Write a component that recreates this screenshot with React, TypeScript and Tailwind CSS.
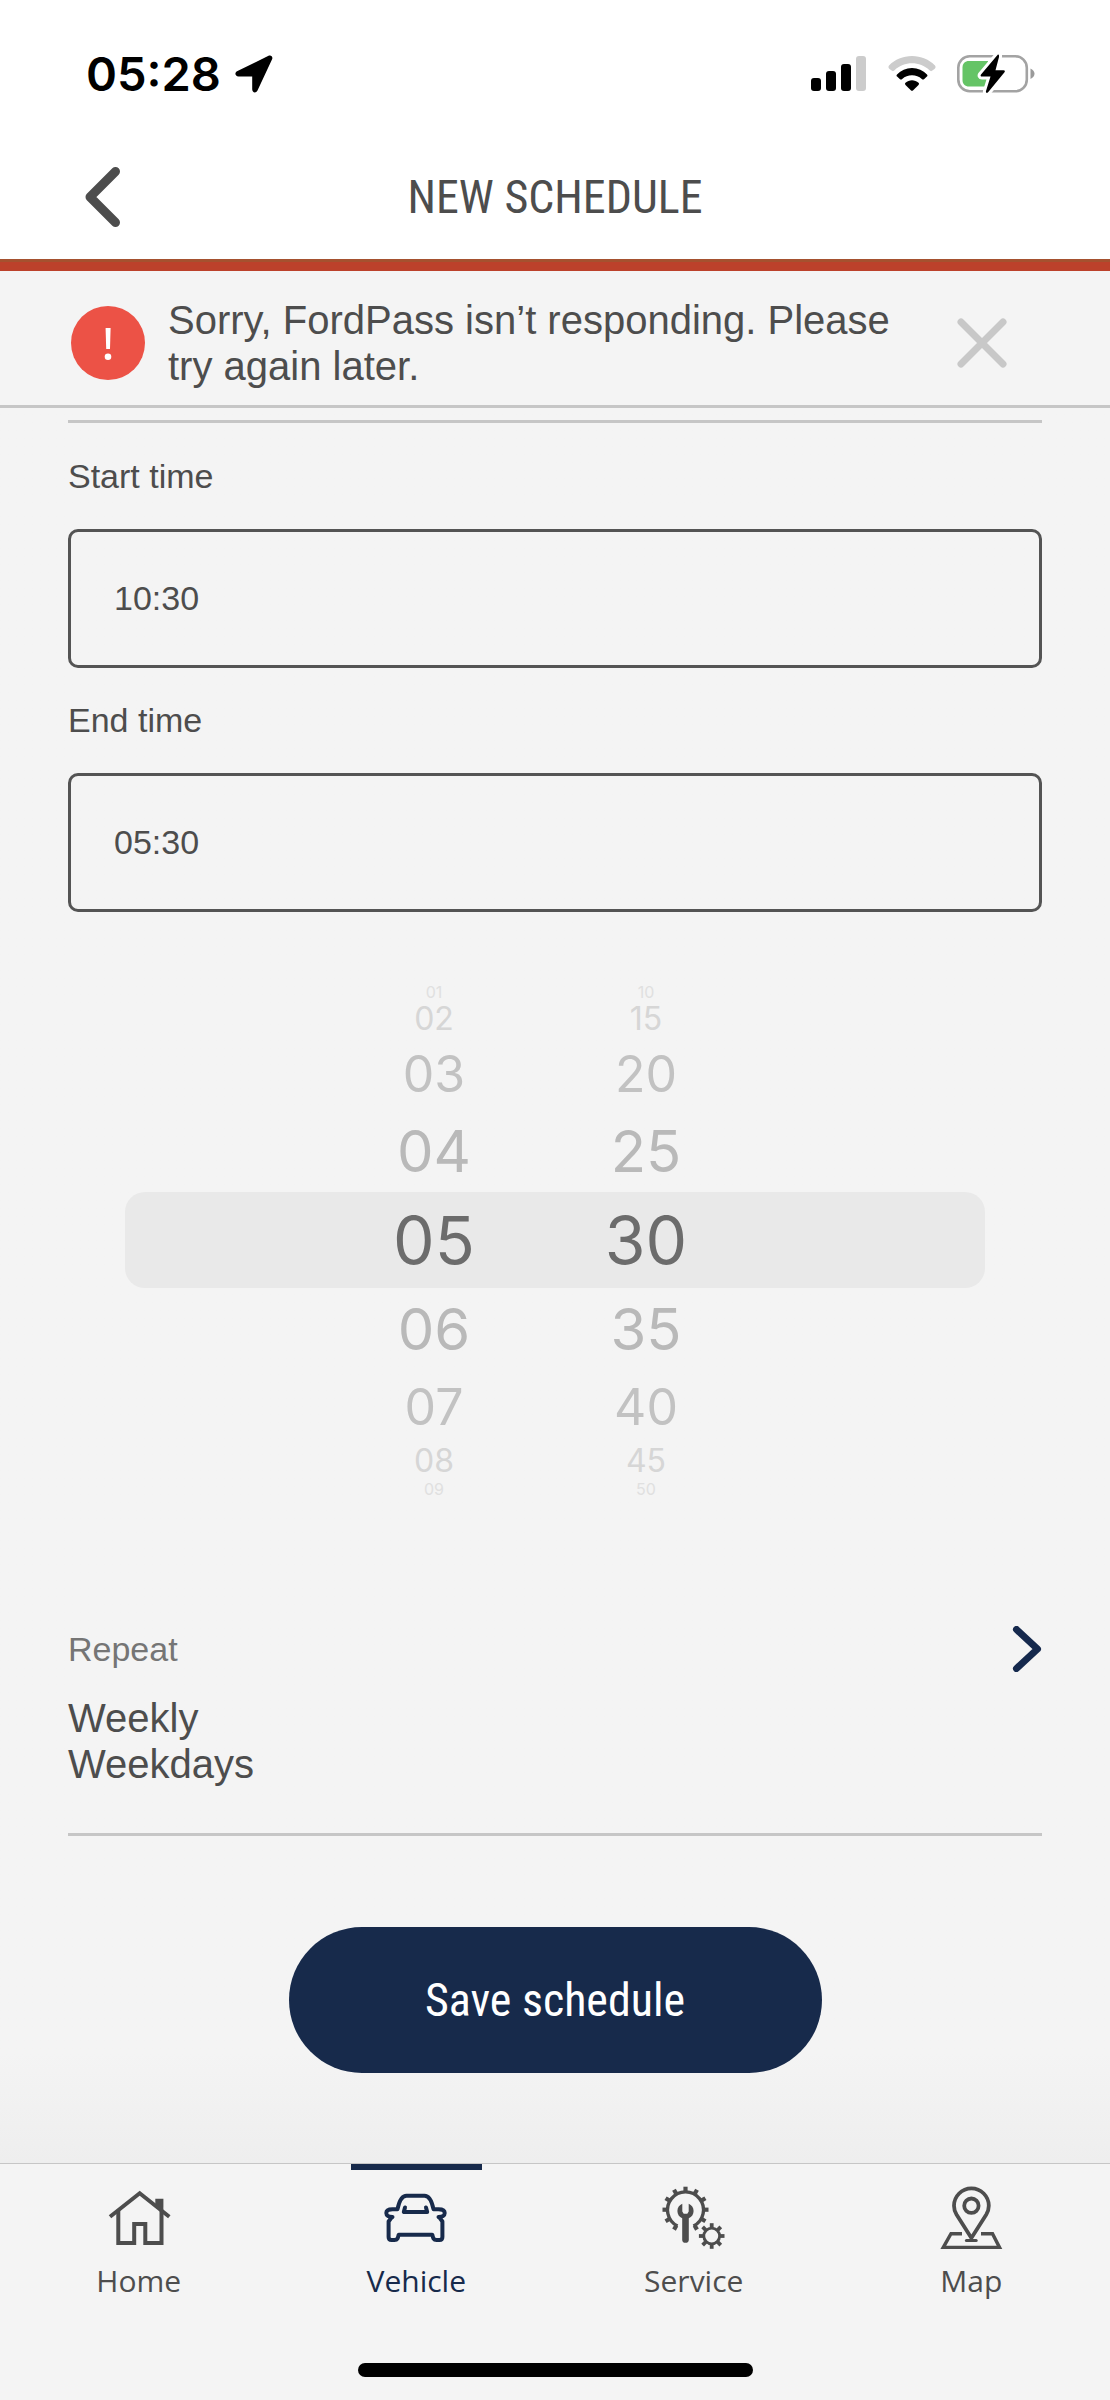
import { useState } from "react";
import type { ReactNode } from "react";

interface WheelProps {
  label: string;
  count: number;
  step: number;
  value: number;
  onChange: (value: number) => void;
}

interface Tab {
  label: string;
  icon: ReactNode;
}

// One entry per distance from the selected row.
const WHEEL_ROWS = [
  "h-[96px] text-[66px] text-[#6c6c6c]",
  "h-[82px] text-[58px] text-[#b9b9b9]",
  "h-[73px] text-[50px] text-[#c2c2c2]",
  "h-[36px] text-[32px] text-[#d6d6d6]",
  "h-[19px] text-[16px] text-[#e0e0e0]",
];

const OFFSETS = [-4, -3, -2, -1, 0, 1, 2, 3, 4];

const pad = (value: number) => String(value).padStart(2, "0");

function Wheel({ label, count, step, value, onChange }: WheelProps) {
  return (
    <div role="listbox" aria-label={label} className="flex w-[212px] flex-col">
      {OFFSETS.map((offset) => {
        const item = ((value / step + offset + count) % count) * step;
        return (
          <button
            key={offset}
            type="button"
            role="option"
            aria-selected={offset === 0}
            onClick={() => onChange(item)}
            className={`flex items-center justify-center font-[Inter,sans-serif] leading-none ${WHEEL_ROWS[Math.abs(offset)]}`}
          >
            {pad(item)}
          </button>
        );
      })}
    </div>
  );
}

function StatusIcons() {
  return (
    <div className="flex items-center gap-[21px]">
      <svg width="56" height="36" viewBox="0 0 56 36" aria-hidden="true">
        <rect x="0" y="22" width="10" height="13" rx="3" />
        <rect x="15" y="15" width="10" height="20" rx="3" />
        <rect x="30" y="8" width="10" height="27" rx="3" />
        <rect x="45" y="0" width="10" height="35" rx="3" fill="#cccccc" />
      </svg>
      <svg width="48" height="36" viewBox="0 0 48 36" aria-hidden="true">
        <path
          d="M1 9.5C7 3.5 15 0 24 0S41 3.5 47 9.5C48 11 47.5 12 46.5 13L44 14.8C43 15.5 42.2 15 41.5 14.3C36.5 9.5 30.5 7.3 24 7.3S11.5 9.5 6.5 14.3C5.8 15 5 15.5 4 14.8L1.5 13C.5 12 0 11 1 9.5Z"
          fill="#cccccc"
        />
        <path d="M9 18.5C13 14.2 18 12 24 12S35 14.2 39 18.5C39.8 19.5 39.5 20 38.9 20.6L36 23.2C35.2 23.9 34.5 23.6 33.8 23C31 20.4 27.8 19.2 24 19.2S17 20.4 14.2 23C13.5 23.6 12.8 23.9 12 23.2L9.1 20.6C8.5 20 8.2 19.5 9 18.5Z" />
        <path d="M17.5 26.8C21 23.3 27 23.3 30.5 26.8C31.2 27.5 31.2 28.2 30.5 29L25.2 34.3C24.4 35 23.6 35 22.8 34.3L17.5 29C16.8 28.2 16.8 27.5 17.5 26.8Z" />
      </svg>
      <svg width="78" height="40" viewBox="0 0 78 40" aria-hidden="true">
        <rect x="1.3" y="2.3" width="68.5" height="35" rx="11.5" fill="none" stroke="#a3a3a3" strokeWidth="2.6" />
        <path d="M73.5 14.5C76.5 16 77.5 18 77.5 19.8S76.5 23.5 73.5 25Z" fill="#9a9a9a" />
        <path d="M12 7H31V32.5H12C8 32.5 5.5 30 5.5 26V13.5C5.5 9.5 8 7 12 7Z" fill="#65c466" />
        <path
          d="M40.5 1L24 20.5C23.2 21.6 23.7 22.6 25 22.6H33.5L29 37C28.5 39 30 39.5 31.3 38L47.5 18.3C48.3 17.2 47.8 16.3 46.5 16.3H38.5L42 3C42.3 1 41.6 0 40.5 1Z"
          stroke="#ffffff"
          strokeWidth="6"
          paintOrder="stroke"
        />
      </svg>
    </div>
  );
}

function HomeIcon() {
  return (
    <svg width="64" height="64" viewBox="0 0 64 64" fill="none" stroke="currentColor" strokeWidth="4" aria-hidden="true">
      <path d="M3 30.7L32.7 7.3L62.3 30.7" />
      <path d="M11.3 24V57H27.2V38H38.3V57H54.5V24" />
      <path d="M48.3 12.7H56.4V27L48.3 21Z" fill="currentColor" stroke="none" />
    </svg>
  );
}

function CarIcon() {
  return (
    <svg
      width="64"
      height="64"
      viewBox="0 0 64 64"
      fill="none"
      stroke="currentColor"
      strokeWidth="4"
      strokeLinecap="round"
      strokeLinejoin="round"
      aria-hidden="true"
    >
      <path d="M8.5 31C4.5 30.5 2.3 30 2.3 27C2.3 24.3 4.5 23.2 8.5 23.2H13.5C15.5 13.5 18 9.7 22.5 9.7H40.5C45 9.7 47.5 13.5 49.5 23.2H54.5C58.5 23.2 60.7 24.3 60.7 27C60.7 30 58.5 30.5 54.5 31" />
      <path d="M7.5 31.5L4.6 35.5V51C4.6 53 5.5 54 7.5 54H10.5C13.5 54 14 52 14.7 48.7H48.3C49 52 49.5 54 52.5 54H55.5C57.5 54 58.4 53 58.4 51V35.5L55.5 31.5" />
      <path d="M21 21.5L19.8 26H43.2L42 21.5" />
    </svg>
  );
}

function ServiceIcon() {
  const largeTeeth = [0, 30, 60, 90, 120, 150, 210, 240, 270, 300, 330];
  const smallTeeth = [0, 45, 90, 135, 180, 225, 270, 315];

  return (
    <svg width="64" height="64" viewBox="0 0 64 64" fill="none" stroke="currentColor" strokeWidth="3.4" aria-hidden="true">
      <path d="M15.5 40A18 18 0 1 1 31.5 40" />
      {largeTeeth.map((angle) => (
        <path key={angle} d="M23.5 5.5V.7" strokeWidth="4.2" transform={`rotate(${angle} 23.5 23.7)`} />
      ))}
      <path
        d="M20.3 17.8C17.3 19 15.4 21.6 15.4 25C15.4 28.3 17.2 31 20.2 32.2V54C20.2 57.8 26.8 57.8 26.8 54V32.2C29.8 31 31.6 28.3 31.6 25C31.6 21.6 29.7 19 26.7 17.8V25.5L25.3 27.8H21.7L20.3 25.5Z"
        fill="currentColor"
        stroke="none"
      />
      <circle cx="49.7" cy="50" r="7.9" strokeWidth="2.8" />
      {smallTeeth.map((angle) => (
        <path key={angle} d="M49.7 42V37.2" strokeWidth="3.8" transform={`rotate(${angle} 49.7 50)`} />
      ))}
    </svg>
  );
}

function MapIcon() {
  return (
    <svg width="64" height="64" viewBox="0 0 64 64" fill="none" stroke="currentColor" strokeWidth="3.8" aria-hidden="true">
      <path d="M32.4 52L17.5 28.5C16 26 15 23 15 19.8A17.4 17.4 0 0 1 49.8 19.8C49.8 23 48.8 26 47.3 28.5Z" />
      <circle cx="32.4" cy="19.7" r="7.2" />
      <path d="M27.4 54.4H37.2" strokeLinecap="round" strokeWidth="3" />
      <path d="M23 47.7H12L4.3 61.4H60.5L53.5 47.7H42" strokeWidth="3.4" />
    </svg>
  );
}

const TABS: Tab[] = [
  { label: "Home", icon: <HomeIcon /> },
  { label: "Vehicle", icon: <CarIcon /> },
  { label: "Service", icon: <ServiceIcon /> },
  { label: "Map", icon: <MapIcon /> },
];

const fieldClass =
  "mt-[33px] h-[139px] w-full rounded-[10px] border-[3px] border-[#545454] bg-transparent px-[43px] text-[34px] text-[#4d4d4d]";

export default function App() {
  const [startTime, setStartTime] = useState("10:30");
  const [hour, setHour] = useState(5);
  const [minute, setMinute] = useState(30);
  const [showError, setShowError] = useState(true);
  const [activeTab, setActiveTab] = useState("Vehicle");

  return (
    <div className="flex min-h-screen flex-col bg-[#f4f4f4] font-['Liberation_Sans',Arial,sans-serif] text-[#4d4d4d]">
      <header className="bg-white">
        <div className="flex h-[134px] items-center justify-between pt-[14px] pr-[75px] pl-[86px] text-black">
          <div className="flex items-center gap-[14px]">
            <span className="font-[Inter,sans-serif] text-[47px] leading-[52px] font-semibold">05:28</span>
            <svg width="38" height="38" viewBox="0 0 38 38" aria-hidden="true">
              <path d="M2.5 16L33.5 .8C36 -.2 38 1.5 37.2 4L22.5 35.5C21 38.5 17.2 37.8 17.2 34.3V21.5H3.5C0 21.5 -.8 17.5 2.5 16Z" />
            </svg>
          </div>
          <StatusIcons />
        </div>

        <div className="grid h-[125px] grid-cols-[1fr_auto_1fr] items-center px-[85px]">
          <button type="button" aria-label="Back">
            <svg width="36" height="60" viewBox="0 0 36 60" fill="none" stroke="#4d4d4d" strokeWidth="9" strokeLinecap="round" strokeLinejoin="round">
              <path d="M30.5 4.5L5 30L30.5 55.5" />
            </svg>
          </button>
          <h1 className="font-['Liberation_Sans_Narrow','Roboto_Condensed',sans-serif] text-[46px] leading-[52px]">NEW SCHEDULE</h1>
        </div>
        <div className="h-3 border-t-[3px] border-[#a5512f] bg-[#bc412b]" />
      </header>

      {showError && (
        <div role="alert" className="flex items-center border-b-[3px] border-[#c6c6c6] pt-[26px] pr-[103px] pb-4 pl-[71px]">
          <svg width="74" height="74" viewBox="0 0 74 74" className="shrink-0" aria-hidden="true">
            <circle cx="37" cy="37" r="37" fill="#ec5246" />
            <path d="M34.6 22H39.6L39 43H35.2Z" fill="#ffffff" />
            <circle cx="37" cy="50.7" r="3.3" fill="#ffffff" />
          </svg>
          <p className="mr-16 ml-[23px] flex-1 text-[40px] leading-[46px]">
            Sorry, FordPass isn’t responding. Please try again later.
          </p>
          <button type="button" aria-label="Dismiss" onClick={() => setShowError(false)}>
            <svg width="50" height="50" viewBox="0 0 50 50" stroke="#c8c8c8" strokeWidth="7" strokeLinecap="round">
              <path d="M4 4L46 46M46 4L4 46" />
            </svg>
          </button>
        </div>
      )}

      <main className="flex flex-1 flex-col bg-linear-to-t from-[#eeeeee] to-[#f4f4f4] to-[110px] px-[68px] pt-3">
        <form className="flex flex-col border-t-[3px] border-[#c6c6c6]" onSubmit={(event) => event.preventDefault()}>
          <label htmlFor="start-time" className="mt-[33px] text-[34px] leading-10">
            Start time
          </label>
          <input
            id="start-time"
            type="text"
            value={startTime}
            onChange={(event) => setStartTime(event.target.value)}
            className={fieldClass}
          />

          <label htmlFor="end-time" className="mt-8 text-[34px] leading-10">
            End time
          </label>
          <input id="end-time" type="text" readOnly value={`${pad(hour)}:${pad(minute)}`} className={fieldClass} />

          <div className="relative mx-[57px] mt-[70px] flex justify-center pr-[30px]">
            <div className="absolute inset-x-0 top-1/2 h-[96px] -translate-y-1/2 rounded-[20px] bg-[#e9e9e9]" />
            <div className="relative flex">
              <Wheel label="Hour" count={24} step={1} value={hour} onChange={setHour} />
              <Wheel label="Minute" count={12} step={5} value={minute} onChange={setMinute} />
            </div>
          </div>

          <button type="button" className="mt-[128px] border-b-[3px] border-[#c6c6c6] pb-[46px] text-left">
            <span className="flex items-center justify-between">
              <span className="text-[34px] leading-10 text-[#757575]">Repeat</span>
              <svg width="30" height="46" viewBox="0 0 30 46" fill="none" stroke="#15294d" strokeWidth="7" strokeLinecap="round" strokeLinejoin="round" aria-hidden="true">
                <path d="M4.5 3.5L25.5 23L4.5 42.5" />
              </svg>
            </span>
            <span className="mt-[23px] block text-[40px] leading-[46px]">
              Weekly
              <br />
              Weekdays
            </span>
          </button>

          <button
            type="submit"
            className="mt-[91px] mb-[90px] h-[146px] w-[533px] self-center rounded-full bg-[#172a4b] font-['Liberation_Sans_Narrow','Roboto_Condensed',sans-serif] text-[46px] text-white"
          >
            Save schedule
          </button>
        </form>
      </main>

      <nav className="border-t border-[#c6c6c6]">
        <div className="grid grid-cols-4">
          {TABS.map(({ label, icon }) => {
            const active = label === activeTab;
            return (
              <button
                key={label}
                type="button"
                aria-current={active ? "page" : undefined}
                onClick={() => setActiveTab(label)}
                className={`flex flex-col items-center ${active ? "text-[#172a4b]" : "text-[#4d4d4d]"}`}
              >
                <span className={`mb-4 h-1.5 w-[131px] ${active ? "bg-[#172a4b]" : "bg-transparent"}`} />
                {icon}
                <span className="mt-[11px] font-['Open_Sans',sans-serif] text-[30px] leading-10 font-medium">{label}</span>
              </button>
            );
          })}
        </div>
        <div className="mx-auto mt-[62px] mb-[23px] h-[14px] w-[395px] rounded-full bg-black" />
      </nav>
    </div>
  );
}
